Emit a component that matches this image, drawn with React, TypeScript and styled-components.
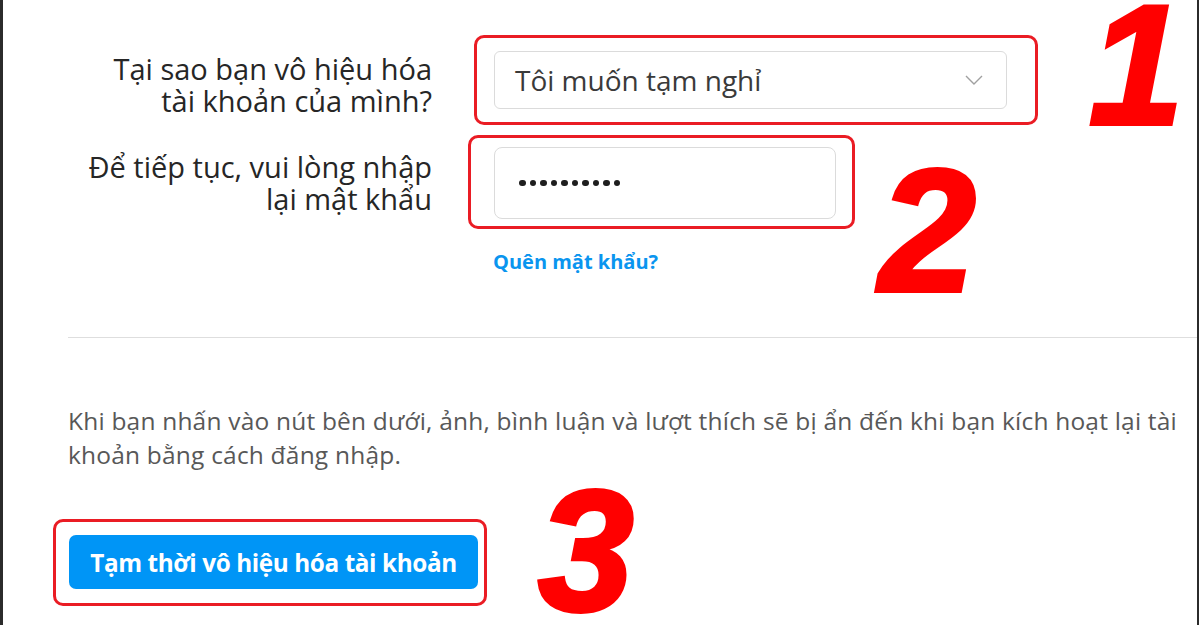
import styled, { createGlobalStyle } from 'styled-components';

const GlobalStyle = createGlobalStyle`
  html, body {
    margin: 0;
    padding: 0;
    background: #fff;
  }
  body {
    font-family: "Open Sans", "Noto Sans", sans-serif;
  }
`;

const SFrame = styled.div`
  position: relative;
  box-sizing: border-box;
  width: 1199px;
  height: 625px;
  overflow: hidden;
  border-left: 3px solid #2b2b2b;
  border-right: 2px solid #2b2b2b;
  background: #fff;
  display: flex;
  flex-direction: column;
`;

const SForm = styled.div`
  display: grid;
  grid-template-columns: 429px 1fr;
  column-gap: 36px;
  row-gap: 10px;
  padding-top: 35px;
`;

const SLabel = styled.div<{ $top: number }>`
  padding-top: ${p => p.$top}px;
  text-align: right;
  font-size: 29px;
  line-height: 32px;
  color: #262626;
  font-weight: 500;
  white-space: nowrap;
`;

const SFieldCell = styled.div`
  display: flex;
  flex-direction: column;
  align-items: flex-start;
`;

const SMarkBox = styled.div<{ $pad: string; $ml?: number }>`
  position: relative;
  box-sizing: border-box;
  border: 3px solid #ea1c24;
  border-radius: 10px;
  padding: ${p => p.$pad};
  margin-left: ${p => p.$ml || 0}px;
`;

const SMark = styled.span<{ $x: number; $y: number; $size: number }>`
  position: absolute;
  left: ${p => p.$x}px;
  top: ${p => p.$y}px;
  font-family: "Liberation Sans", Arial, sans-serif;
  font-weight: 700;
  font-style: italic;
  font-size: ${p => p.$size}px;
  line-height: 1;
  color: #ff0000;
  -webkit-text-stroke: 4px #ff0000;
  pointer-events: none;
`;

const SSelect = styled.div`
  box-sizing: border-box;
  width: 513px;
  height: 58px;
  border: 1px solid #dbdbdb;
  border-radius: 6px;
  background: #fff;
  display: flex;
  align-items: center;
  justify-content: space-between;
  padding: 0 20px 0 20px;
  font-size: 28px;
  color: #3a3a3a;
`;

const SChevron = styled.svg`
  width: 20px;
  height: 12px;
  margin-right: 2px;
`;

const SPassword = styled.div`
  box-sizing: border-box;
  width: 342px;
  height: 72px;
  border: 1px solid #dbdbdb;
  border-radius: 8px;
  background: #fff;
  display: flex;
  align-items: center;
  padding-left: 24px;
`;

const SDots = styled.span`
  display: flex;
  gap: 4px;
  > i {
    display: block;
    width: 6.5px;
    height: 6.5px;
    border-radius: 50%;
    background: #1e1e1e;
  }
`;

const SForgot = styled.a`
  margin: 21px 0 0 25px;
  font-size: 20px;
  line-height: 24px;
  font-weight: 700;
  color: #0a95ef;
  text-decoration: none;
`;

const SDivider = styled.hr`
  margin: 63px 0 0 65px;
  border: 0;
  border-top: 1px solid #dedede;
  height: 0;
`;

const SNote = styled.p`
  margin: 66px 8px 0 65px;
  font-size: 24.5px;
  line-height: 34px;
  color: #585858;
  letter-spacing: 0.2px;
`;

const SButtonRow = styled.div`
  margin: 47px 0 0 50px;
  display: flex;
`;

const SButton = styled.button`
  box-sizing: border-box;
  width: 409px;
  height: 54px;
  border: 0;
  border-radius: 7px;
  background: #0095f6;
  color: #fff;
  font-family: "Open Sans", "Noto Sans", sans-serif;
  font-size: 24.3px;
  font-weight: 700;
  letter-spacing: -0.4px;
  white-space: nowrap;
  cursor: pointer;
`;

export default function App() {
  return (
    <>
      <GlobalStyle />
      <SFrame>
        <SForm>
          <SLabel $top={18}>
            Tại sao bạn vô hiệu hóa
            <br />
            tài khoản của mình?
          </SLabel>
          <SFieldCell>
            <SMarkBox $pad="13px 28px 13px 17px" $ml={6}>
              <SSelect>
                <span>Tôi muốn tạm nghỉ</span>
                <SChevron viewBox="0 0 20 12">
                  <polyline points="2,2 10,10 18,2" fill="none" stroke="#a0a0a0" strokeWidth="1.4" />
                </SChevron>
              </SSelect>
              <SMark $x={612} $y={-58} $size={170}>1</SMark>
            </SMarkBox>
          </SFieldCell>

          <SLabel $top={16}>
            Để tiếp tục, vui lòng nhập
            <br />
            lại mật khẩu
          </SLabel>
          <SFieldCell>
            <SMarkBox $pad="9px 16px 7px 23px">
              <SPassword>
                <SDots>
                  {Array.from({ length: 10 }).map((_, i) => (
                    <i key={i} />
                  ))}
                </SDots>
              </SPassword>
              <SMark $x={408} $y={6} $size={174}>2</SMark>
            </SMarkBox>
            <SForgot href="#">Quên mật khẩu?</SForgot>
          </SFieldCell>
        </SForm>

        <SDivider />

        <SNote>
          Khi bạn nhấn vào nút bên dưới, ảnh, bình luận và lượt thích sẽ bị ẩn đến khi bạn kích hoạt lại tài khoản bằng cách đăng nhập.
        </SNote>

        <SButtonRow>
          <SMarkBox $pad="13px 6px 14px 13px">
            <SButton>Tạm thời vô hiệu hóa tài khoản</SButton>
            <SMark $x={482} $y={-58} $size={172}>3</SMark>
          </SMarkBox>
        </SButtonRow>
      </SFrame>
    </>
  );
}
